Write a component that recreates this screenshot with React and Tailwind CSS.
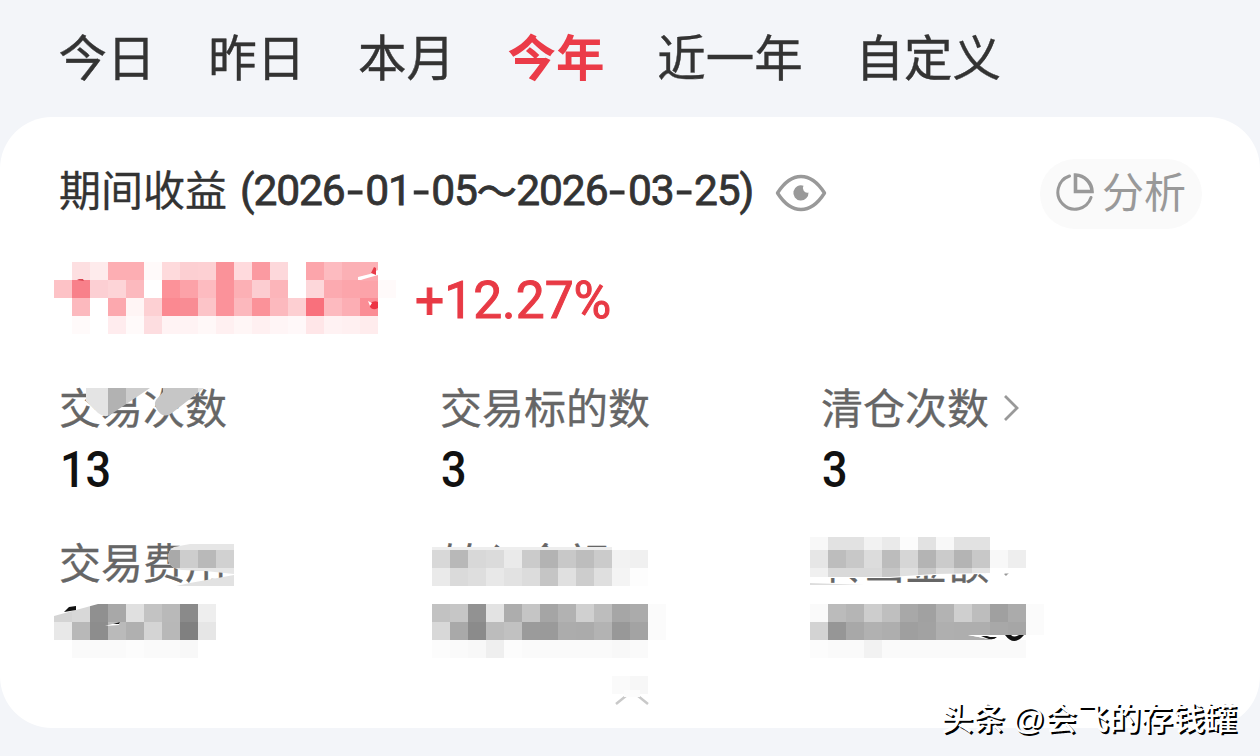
const tabs = ['今日', '昨日', '本月', '今年', '近一年', '自定义'];

const CELL = 18;

// Each row is a list of hex colors, '-' leaves the cell empty
const amountMosaic = [
  '- fddfe1 feebec fdaeb3 fdaeb3 fffafa fedadc fccfd2 fdd0d3 fa9299 ffdadd fb9aa1 fdd8db - fca5ab fdbbc0 fbb0b5 fcb0b5',
  'fdc2c6 f8808a fccfd3 fdd4d7 fcb9be - fc9299 fca2a8 fdbbc0 fb929a fcb0b5 fccdd1 fcb5ba - fdd7da fcaab0 fca5ab fca3a9 fffafa',
  '- fcb9be - fca8ae fff5f5 fdd0d3 fb8991 f98c94 fcc4c8 fb929a fcb8bd fb9299 fcb9be fdcfd2 f9707c fdbabf fcaeb4 fb8d95',
  '- fffafa - ffecee fffafa fddde0 fff3f4 fff3f4 fff8f8 fff0f1 fff6f6 fff0f1 fff5f6 fff8f9 ffe6e8 fff2f3 fff0f1 ffeced',
];

const feeMosaic = [
  'd4d4d4 d8d8d8 909090 a8a8a8 e0e0e0 c3c3c3 b9b9b9 8a8a8a eeeeee',
  'e8e8e8 b8b8b8 8d8d8d bababa b0b0b0 d4d4d4 b8b8b8 808080 e6e6e6',
  '- fafafa fafafa fafafa fcfcfc fafafa fafafa f8f8f8',
];

const inLabelMosaic = [
  'd8d8d8 b8b8b8 d8d8d8 dbdbdb eaeaea cbcbcb b3b3b3 c8c8c8 bdbdbd cbcbcb f2f2f2 f0f0f0',
  'eaeaea dadada dedede e8e8e8 e2e2e2 dcdcdc c5c5c5 e0e0e0 cdcdcd dfdfdf f4f4f4 fdfdfd',
];

const inValueMosaic = [
  'c2c2c2 c6c6c6 929292 e3e3e3 adadad c5c5c5 a5a5a5 b2b2b2 d0d0d0 bdbdbd a6a6a6 ababab fbfbfb',
  'd8d8d8 a9a9a9 8b8b8b bcbcbc c1c1c1 9b9b9b 9a9a9a acacac ababab b3b3b3 989898 a3a3a3 fbfbfb',
  'fcfcfc fafafa f8f8f8 efefef fcfcfc fafafa fafafa fafafa fafafa fafafa f8f8f8 fafafa',
];

const outLabelMosaic = [
  'f8f8f8 e2e2e2 e2e2e2 f2f2f2 eaeaea fcfcfc e2e2e2 f8f8f8 e2e2e2 e2e2e2 ffffff ffffff',
  'e6e6e6 bdbdbd c8c8c8 dcdcdc bcbcbc d6d6d6 b4b4b4 cbcbcb b4b4b4 c8c8c8 f8f8f8 eeeeee',
  'f0f0f0 d9d9d9 d9d9d9 d9d9d9 c6c6c6 e0e0e0 c9c9c9 dddddd d4d4d4 e4e4e4 ffffff ffffff',
];

const outValueMosaic = [
  'fafafa bbbbbb b5b5b5 cdcdcd bfbfbf a8a8a8 a1a1a1 b3b3b3 cfcfcf bdbdbd a0a0a0 ababab fbfbfb',
  'd3d3d3 969696 a8a8a8 b1b1b1 aeaeae 9f9f9f a2a2a2 afafaf aeaeae aeaeae a8a8a8 a6a6a6 fbfbfb',
  'fcfcfc fafafa fafafa f2f2f2 fafafa fafafa fafafa fafafa fafafa fafafa fafafa fafafa',
];

function Mosaic({ x, y, rows, clip }) {
  return (
    <g clipPath={clip ? `url(#${clip})` : undefined} shapeRendering="crispEdges">
      {rows.map((row, r) =>
        row.split(' ').map((color, c) =>
          color === '-' ? null : (
            <rect key={`${r}-${c}`} x={x + c * CELL} y={y + r * CELL} width={CELL} height={CELL} fill={`#${color}`} />
          )
        )
      )}
    </g>
  );
}

function PrivacyMask() {
  return (
    <svg className="absolute left-0 top-0 pointer-events-none" width="1260" height="756" viewBox="0 0 1260 756">
      <defs>
        <clipPath id="fee"><path d="M54 616L98 604H216V660H54Z" /></clipPath>
        <clipPath id="feeLabel"><path d="M174 547L190 544H234V574L205 571L182 570Q168 568 168 558Q168 550 174 547Z" /></clipPath>
        <clipPath id="outLabel"><path d="M810 537H1026V572L990 573L935 574L890 577H810Z" /></clipPath>
        <clipPath id="outValue"><path d="M810 604H1044V635H968L994 640H1026V658H810Z" /></clipPath>
        <clipPath id="countA"><path d="M86 388H150L110 415Q104 418 98 413L86 401Z" /></clipPath>
        <clipPath id="countB"><path d="M163 388H204L172 413Q164 419 158 411Q153 405 156 400L163 392Z" /></clipPath>
      </defs>

      {/* total profit */}
      <Mosaic x={54} y={262} rows={amountMosaic} />
      <path d="M358 277L370 274L378 270V280H358Z" fill="#fff" />
      <path d="M364 279L378 275V281H358Z" fill="#fca8ae" />
      <path d="M371 273L374 267L376 268L376 275Z" fill="#e83a48" />
      <path d="M370 303Q375 300 378 302V308Q373 311 370 307Z" fill="#ed3545" />
      <path d="M368 301L372 303L370 306Z" fill="#fff" />
      <path d="M77 280L79 279H83L84 281Z" fill="#d94552" />

      {/* trade count */}
      <rect x="86" y="380" width="120" height="8" fill="#fff" />
      <g clipPath="url(#countA)">
        <rect x="86" y="388" width="22" height="30" fill="#e4e4e4" />
        <rect x="108" y="388" width="18" height="30" fill="#b2b2b2" />
        <rect x="126" y="388" width="26" height="30" fill="#cdcdcd" />
      </g>
      <g clipPath="url(#countB)">
        <rect x="150" y="388" width="48" height="32" fill="#c6c6c6" />
        <rect x="198" y="388" width="8" height="32" fill="#dedede" />
      </g>

      {/* fees */}
      <g clipPath="url(#feeLabel)">
        <rect x="162" y="544" width="72" height="32" fill="#e6e6e6" />
        <rect x="162" y="550" width="18" height="18" fill="#a9a9a9" />
        <rect x="180" y="550" width="18" height="18" fill="#cdcdcd" />
        <rect x="198" y="550" width="18" height="18" fill="#b9b9b9" />
        <rect x="216" y="550" width="18" height="18" fill="#d1d1d1" />
      </g>
      <rect x="190" y="538" width="46" height="6" fill="#fff" />
      <path d="M176 586L190 583L234 575V586Z" fill="#e2e2e2" />
      <Mosaic x={54} y={604} rows={feeMosaic} clip="fee" />
      <path d="M64 612L69 607L76 606V610Z" fill="#111" />
      <path d="M105 626L120 622L119 625Z" fill="#fff" />
      <path d="M113 624L120 622L119 624Z" fill="#111" />

      {/* transferred in */}
      <rect x="432" y="538" width="230" height="5" fill="#fff" />
      <rect x="432" y="547" width="180" height="3" fill="#eeeeee" />
      <Mosaic x={432} y={550} rows={inLabelMosaic} />
      <Mosaic x={432} y={604} rows={inValueMosaic} />

      {/* transferred out */}
      <path d="M810 537H1026V573L935 575L890 578H810Z" fill="#fff" />
      <Mosaic x={810} y={532} rows={outLabelMosaic} clip="outLabel" />
      <path d="M810 583L864 585H810Z" fill="#dddddd" />
      <Mosaic x={810} y={604} rows={outValueMosaic} clip="outValue" />
      <path d="M968 635H982L998 640H994Z" fill="#fff" />
      <path d="M981 636H987L990 637H997Q993 641 986 638Z" fill="#111" />
      <path d="M1005 635H1011Q1014 638 1019 635H1024Q1014 647 1005 635Z" fill="#111" />

      {/* collapse handle */}
      <path d="M616 704L632 691L648 704" fill="none" stroke="#c9c9c9" strokeWidth="2.5" />
      <rect x="612" y="676" width="18" height="18" fill="#fafafa" />
      <rect x="630" y="676" width="18" height="18" fill="#f7f7f7" />
      <rect x="624" y="690" width="16" height="7" fill="#fcfcfc" />
    </svg>
  );
}

function EyeIcon() {
  return (
    <svg className="block" width="52" height="38" viewBox="0 0 52 38" fill="none">
      <path d="M2.5 19Q13 2.5 26 2.5T49.5 19Q39 35.5 26 35.5T2.5 19Z" stroke="#999" strokeWidth="3.4" strokeLinejoin="round" />
      <path d="M28.5 11.8A7.6 7.6 0 1 0 33.5 18.5A4.5 4.5 0 0 1 28.5 11.8Z" fill="#999" />
    </svg>
  );
}

function PieIcon() {
  return (
    <svg className="mb-[4px] block" width="38" height="38" viewBox="0 0 38 38" fill="none" stroke="#999" strokeWidth="3" strokeLinecap="round">
      <path d="M13.5 3A17 17 0 1 0 35 24.5" />
      <path d="M19.5 2A17 17 0 0 1 36 18.5H19.5Z" strokeWidth="3.6" />
    </svg>
  );
}

function DateText({ children }) {
  return children.split('-').map((part, i) => (
    <span key={i} className="flex items-center">
      {i > 0 && <span className="inline-block w-[20.5px] scale-x-[1.35] text-center tracking-normal">-</span>}
      <span>{part}</span>
    </span>
  ));
}

function Stat({ label, value, arrow }) {
  return (
    <div className="h-[155px] w-[381px]">
      <div className="flex h-[50px] items-center text-[42px] text-[#666] [-webkit-text-stroke:0.3px_#666]">
        <span className="pb-[5px] leading-[45px]">{label}</span>
        {arrow && (
          <svg className="ml-[13px]" width="20" height="30" viewBox="0 0 20 30" fill="none" stroke="#999" strokeWidth="2.8">
            <path d="M3 3L15 15L3 27" />
          </svg>
        )}
      </div>
      {value && (
        <div className="ml-px mt-[9px] origin-left scale-x-[0.9] font-[Roboto] text-[50px] font-medium leading-[56px] text-[#111]">{value}</div>
      )}
    </div>
  );
}

export default function App() {
  return (
    <div className="relative h-[756px] w-[1260px] overflow-hidden bg-[#f3f5f9] font-['Noto_Sans_CJK_SC',sans-serif]">
      <nav className="flex h-[117px] items-center gap-[52.7px] pl-[58.5px] text-[48.5px] leading-[110px] text-[#333]">
        {tabs.map(tab => (
          <span key={tab} className={tab === '今年' ? 'pb-[7px] font-bold text-[#eb3b48]' : 'pb-[7px] [-webkit-text-stroke:0.4px_#333]'}>{tab}</span>
        ))}
      </nav>

      <main className="h-[611px] rounded-[52px] bg-white pl-[59px] pt-[42px]">
        <div className="flex h-[70px] items-center pr-[58px]">
          <span className="pb-[12px] text-[42px] leading-[58px] text-[#333] [-webkit-text-stroke:0.3px_#333]">期间收益</span>
          <span className="ml-[13px] flex w-[516px] items-center whitespace-nowrap pb-[6px] font-[Roboto] text-[42.5px] leading-[62px] tracking-[-1.1px] text-[#333] [-webkit-text-stroke:0.8px_#333]">
            <span>(</span>
            <DateText>2026-01-05</DateText>
            <span className="w-[39.5px] pb-[4px] font-['Noto_Sans_CJK_SC'] text-[40px] leading-[58px]">～</span>
            <DateText>2026-03-25</DateText>
            <span>)</span>
          </span>
          <span className="ml-[19px] pb-[2px]"><EyeIcon /></span>
          <button className="ml-auto flex h-[70px] w-[162px] items-center rounded-full bg-[#fafafa] pl-[16px] text-[42px] text-[#999]">
            <PieIcon />
            <span className="ml-[8px] pb-[8px] leading-[62px]">分析</span>
          </button>
        </div>

        <div className="mt-[42px] h-[60px] pl-[356px]">
          <span className="inline-block font-[Roboto] text-[51.5px] leading-[60px] text-[#e83a45] [-webkit-text-stroke:1px_#e83a45]">+12.27%</span>
        </div>

        <div className="mt-[52px] flex flex-wrap">
          <Stat label="交易次数" value="13" />
          <Stat label="交易标的数" value="3" />
          <Stat label="清仓次数" value="3" arrow />
          <Stat label="交易费用" />
          <Stat label="转入金额" />
          <Stat label="转出金额" arrow />
        </div>
      </main>

      <PrivacyMask />

      <div className="absolute left-[941px] top-[693px] whitespace-nowrap text-[32px] font-medium leading-[46px] text-white [text-shadow:2px_2px_0_#000]">
        头条 <span className="font-['Liberation_Sans']">@</span>会飞的存钱罐
      </div>
    </div>
  );
}
